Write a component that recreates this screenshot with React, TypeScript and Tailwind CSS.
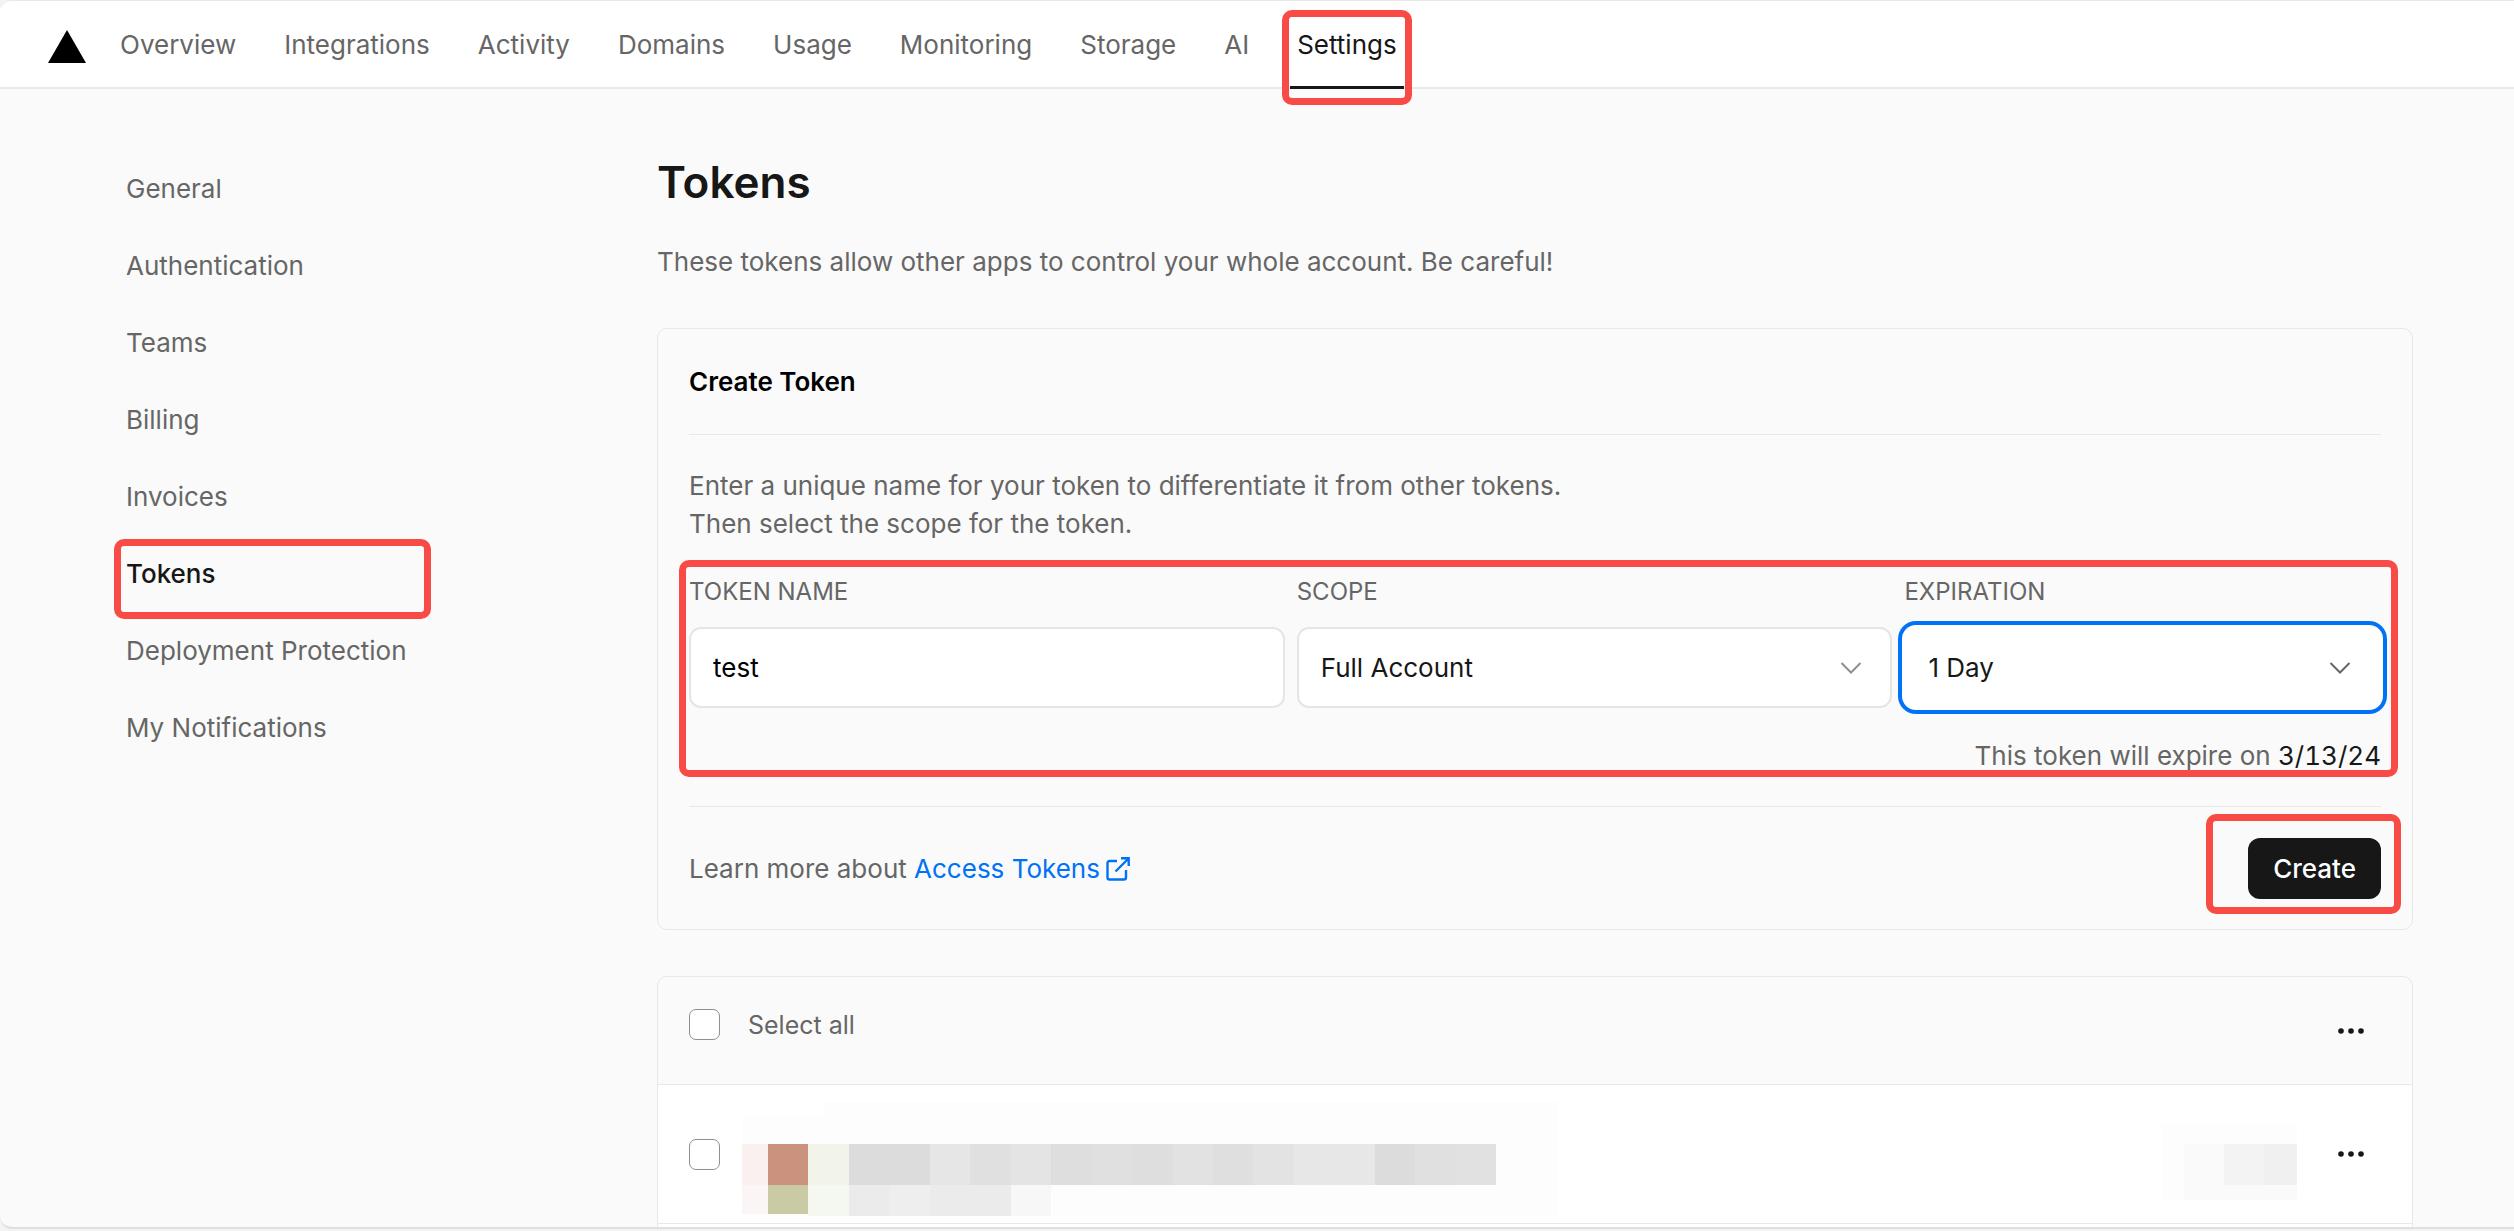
import React from "react";

const navItems = ["Overview", "Integrations", "Activity", "Domains", "Usage", "Monitoring", "Storage", "AI", "Settings"];
const sideItems = [
  "General",
  "Authentication",
  "Teams",
  "Billing",
  "Invoices",
  "Tokens",
  "Deployment Protection",
  "My Notifications",
];

function Marker({ className }: { className: string }) {
  return (
    <span
      aria-hidden="true"
      className={`pointer-events-none absolute z-10 rounded-[10px] border-[7px] border-[#f94b46] ${className}`}
    />
  );
}

function Chevron({ className }: { className: string }) {
  return (
    <svg
      aria-hidden="true"
      viewBox="0 0 22 13"
      className={`pointer-events-none absolute top-1/2 h-[13px] w-[22px] -translate-y-1/2 fill-none stroke-2 ${className}`}
    >
      <path d="M1.5 1.5 11 11l9.500-9.500" />
    </svg>
  );
}

function ExternalIcon() {
  return (
    <svg aria-hidden="true" viewBox="0 0 24 24" className="size-6 fill-none stroke-current stroke-[2.4]">
      <path d="M11 4H3.500a2 2 0 0 0-2 2v14.500a2 2 0 0 0 2 2H18a2 2 0 0 0 2-2V13" />
      <path d="M15 1.300h7.700V9M22.500 1.500 9.500 14.500" />
    </svg>
  );
}

function MoreButton({ label }: { label: string }) {
  return (
    <button type="button" aria-label={label} className="flex h-10 w-[62px] items-center justify-center">
      <svg aria-hidden="true" viewBox="0 0 28 8" className="h-2 w-7 fill-[#171717]">
        <circle cx="4" cy="4" r="2.800" />
        <circle cx="14" cy="4" r="2.800" />
        <circle cx="24" cy="4" r="2.800" />
      </svg>
    </button>
  );
}

function Tick({ id }: { id: string }) {
  return (
    <input
      id={id}
      type="checkbox"
      className="size-[31px] shrink-0 appearance-none rounded-[7px] border border-[#8f8f8f] bg-white"
    />
  );
}

const upper = [
  "#faf0f0", "#cb937d", "#f2f3ea", "#dcdcdc", "#dcdcdc", "#e6e6e6", "#e0e0e0", "#e4e4e4", "#dedede", "#e0e0e0",
  "#dedede", "#e2e2e2", "#dfdfdf", "#e3e3e3", "#e7e7e7", "#e7e7e7", "#dcdcdc", "#e0e0e0", "#e1e1e1",
];
const lower = ["#fbf6f5", "#cacba5", "#f5f8f1", "#ebebeb", "#eeeeee", "#ebebeb", "#ebebeb", "#f7f7f7"];
const cellX = (i: number) => (i === 0 ? 0 : Math.round(26 + (i - 1) * 40.45));

function NameMosaic() {
  return (
    <svg
      role="img"
      aria-label="Hidden token name"
      viewBox="0 0 816 114"
      shapeRendering="crispEdges"
      className="h-[114px] w-[816px] shrink-0"
    >
      <rect x="82" y="0" width="734" height="114" fill="#fdfdfd" />
      <rect x="0" y="14" width="82" height="98" fill="#fdfdfd" />
      {lower.map((c, i) => (
        <rect key={i} x={cellX(i)} y="83" width={cellX(i + 1) - cellX(i)} height={i < 2 ? 29 : 31} fill={c} />
      ))}
      {upper.map((c, i) => (
        <rect key={i} x={cellX(i)} y="42" width={cellX(i + 1) - cellX(i)} height="41" fill={c} />
      ))}
    </svg>
  );
}

function DateMosaic() {
  return (
    <svg
      role="img"
      aria-label="Hidden date"
      viewBox="0 0 135 76"
      shapeRendering="crispEdges"
      className="mt-[6px] h-[76px] w-[135px] shrink-0"
    >
      <rect width="135" height="76" fill="#fdfdfd" />
      <rect x="22" y="20" width="113" height="56" fill="#fafafa" />
      <rect x="62" y="20" width="40" height="41" fill="#f3f3f3" />
      <rect x="102" y="20" width="33" height="41" fill="#f0f0f0" />
    </svg>
  );
}

export default function App() {
  return (
    <div className="h-screen overflow-hidden bg-[#f3f3f3] pb-[2px] font-[Inter,sans-serif] text-[26px] leading-[38px] text-[#666]">
      <div className="flex h-full flex-col overflow-hidden rounded-l-xl border-t border-b-2 border-t-[#e8e8e8] border-b-[#dfdfdf] bg-[#fafafa]">
        <header className="flex h-[88px] shrink-0 items-center border-b-2 border-[#eaeaea] bg-white pl-12">
          <a href="#home" aria-label="Home" className="mr-[34px]">
            <svg aria-hidden="true" viewBox="0 0 38 33" className="mt-1 h-[33px] w-[38px]">
              <path d="M19 0 38 33H0Z" />
            </svg>
          </a>
          <nav className="flex h-full gap-12">
            {navItems.map((item) =>
              item === "Settings" ? (
                <a key={item} href="#settings" aria-current="page" className="relative flex h-full items-center pt-[2px] text-[#171717]">
                  {item}
                  <span className="absolute inset-x-[-7px] bottom-[-2px] h-[3px] bg-[#171717]" />
                  <Marker className="inset-x-[-15px] top-[9px] bottom-[-18px]" />
                </a>
              ) : (
                <a key={item} href={`#${item.toLowerCase()}`} className="flex h-full items-center pt-[2px]">
                  {item}
                </a>
              ),
            )}
          </nav>
        </header>

        <div className="flex items-start pr-[101px] pl-[126px]">
          <aside className="w-[531px] shrink-0 pt-[62px]">
            <nav className="flex w-[305px] flex-col">
              {sideItems.map((item) =>
                item === "Tokens" ? (
                  <a key={item} href="#tokens" aria-current="page" className="relative py-[19px] pb-5 font-medium text-[#171717]">
                    {item}
                    <Marker className="top-[3px] right-0 -bottom-[6px] -left-3" />
                  </a>
                ) : (
                  <a key={item} href={`#${item.toLowerCase().replace(" ", "-")}`} className="py-[19px] pb-5">
                    {item}
                  </a>
                ),
              )}
            </nav>
          </aside>

          <main className="min-w-0 flex-1 pt-16">
            <h1 className="text-[44px] leading-[58px] font-semibold text-[#171717]">Tokens</h1>
            <p className="mt-8">These tokens allow other apps to control your whole account. Be careful!</p>

            <form
              className="mt-[47px] rounded-[10px] border border-[#e8e8e8] px-[31px]"
              onSubmit={(e) => e.preventDefault()}
            >
              <h2 className="border-b border-[#e8e8e8] pt-[34px] pb-[33px] font-semibold text-black">Create Token</h2>
              <p className="mt-8">
                Enter a unique name for your token to differentiate it from other tokens.
                <br />
                Then select the scope for the token.
              </p>

              <div className="relative mt-[30px]">
                <div className="grid grid-cols-[5fr_5fr_4fr] gap-3">
                  <div>
                    <label htmlFor="token-name" className="block text-2xl leading-[38px]">
                      TOKEN NAME
                    </label>
                    <input
                      id="token-name"
                      type="text"
                      defaultValue="test"
                      className="mt-4 block h-[81px] w-full rounded-xl border-2 border-[#e5e5e5] bg-white px-[22px] text-black"
                    />
                  </div>
                  <div>
                    <label htmlFor="scope" className="block text-2xl leading-[38px]">
                      SCOPE
                    </label>
                    <div className="relative mt-4">
                      <select
                        id="scope"
                        className="block h-[81px] w-full appearance-none rounded-xl border-2 border-[#e5e5e5] bg-white px-[22px] text-[#171717]"
                      >
                        <option>Full Account</option>
                      </select>
                      <Chevron className="right-[30px] stroke-[#8f8f8f]" />
                    </div>
                  </div>
                  <div>
                    <label htmlFor="expiration" className="block text-2xl leading-[38px]">
                      EXPIRATION
                    </label>
                    <div className="relative mt-4">
                      <select
                        id="expiration"
                        className="block h-[81px] w-full appearance-none rounded-xl bg-white px-6 text-[#171717] shadow-[0_0_0_2px_#ffffff,0_0_0_6px_#0072f5]"
                      >
                        <option>1 Day</option>
                      </select>
                      <Chevron className="right-[30px] stroke-[#666]" />
                    </div>
                  </div>
                </div>
                <p className="mt-[29px] text-right">
                  This token will expire on <span className="text-[#171717] tabular-nums">3/13/24</span>
                </p>
                <Marker className="-top-[13px] -right-[17px] -bottom-[2px] -left-[10px]" />
              </div>

              <div className="mt-[31px] flex items-center justify-between border-t border-[#e8e8e8] pt-[31px] pb-[30px]">
                <p className="flex items-center">
                  Learn more about&nbsp;
                  <a href="#access-tokens" className="flex items-center gap-[6px] text-[#0072f5]">
                    Access Tokens
                    <ExternalIcon />
                  </a>
                </p>
                <div className="relative">
                  <button type="submit" className="block h-[61px] rounded-xl bg-[#171717] px-[25px] font-medium text-white">
                    Create
                  </button>
                  <Marker className="-top-6 -right-5 -bottom-[15px] -left-[42px]" />
                </div>
              </div>
            </form>

            <section className="mt-[46px] rounded-t-[10px] border border-[#e8e8e8]">
              <div className="flex h-[107px] items-center justify-between pr-[30px] pl-[31px]">
                <div className="flex items-center pb-3">
                  <Tick id="select-all" />
                  <label htmlFor="select-all" className="pl-7 text-[25px]">
                    Select all
                  </label>
                </div>
                <MoreButton label="Selection actions" />
              </div>
              <div className="flex h-[139px] items-center border-t border-[#e8e8e8] bg-white pr-[30px] pl-[31px]">
                <label className="contents">
                  <Tick id="token-1" />
                  <span className="ml-[22px] flex flex-1 items-center justify-between pt-[10px]">
                    <NameMosaic />
                    <DateMosaic />
                  </span>
                </label>
                <div className="ml-[23px]">
                  <MoreButton label="Token actions" />
                </div>
              </div>
              <div className="h-[139px] border-t border-[#e8e8e8] bg-white" />
            </section>
          </main>
        </div>
      </div>
    </div>
  );
}
